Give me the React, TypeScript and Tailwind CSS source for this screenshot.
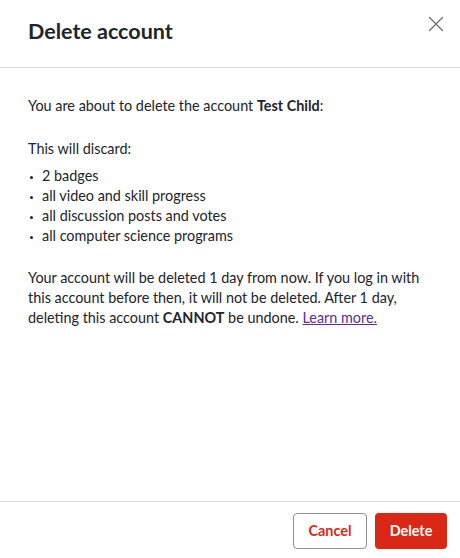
import React from "react";

const items = [
  "2 badges",
  "all video and skill progress",
  "all discussion posts and votes",
  "all computer science programs",
];

export default function App() {
  return (
    <div className="h-screen w-full bg-white flex flex-col text-[#21242c] font-['Lato','Noto_Sans',sans-serif]">
      {/* Header */}
      <div className="h-[68px] shrink-0 border-b border-[#dcdcde] flex items-start justify-between pl-[28px] pr-[16px]">
        <h2 className="mt-[17px] text-[21.5px] leading-[28px] font-bold">Delete account</h2>
        <button className="mt-[16px] w-[16px] h-[16px] flex items-center justify-center text-[#6b6d72]">
          <svg width="16" height="16" viewBox="0 0 16 16" fill="none" stroke="currentColor" strokeWidth="1.3" strokeLinecap="round">
            <path d="M1.5 1.5 L14.5 14.5 M14.5 1.5 L1.5 14.5" />
          </svg>
        </button>
      </div>

      {/* Body */}
      <div className="flex-1 px-[28px] pt-[28px] text-[14.4px] leading-[20px]">
        <p>
          You are about to delete the account <span className="font-bold">Test Child</span>:
        </p>
        <p className="mt-[23px]">This will discard:</p>
        <ul className="mt-[7px]">
          {items.map((item) => (
            <li key={item} className="flex items-center">
              <span className="w-[3px] h-[3px] rounded-full bg-[#21242c] ml-[2px] mr-[9px] mt-[2px]" />
              {item}
            </li>
          ))}
        </ul>
        <p className="mt-[22px]">
          Your account will be deleted 1 day from now. If you log in with this account before then, it will not be deleted. After 1 day, deleting this account <span className="font-bold">CANNOT</span> be undone.{" "}
          <a href="#" className="text-[#5b2e91] underline">Learn more.</a>
        </p>
      </div>

      {/* Footer */}
      <div className="h-[57px] shrink-0 border-t border-[#dcdcde] flex items-start justify-end gap-[8px] pr-[13px] pt-[11px]">
        <button className="h-[36px] w-[74px] rounded-[4px] border border-[#8e9094] bg-white text-[#d92916] text-[14.4px] font-bold">
          Cancel
        </button>
        <button className="h-[36px] w-[72px] rounded-[4px] bg-[#d92916] text-white text-[14.4px] font-bold">
          Delete
        </button>
      </div>
    </div>
  );
}
